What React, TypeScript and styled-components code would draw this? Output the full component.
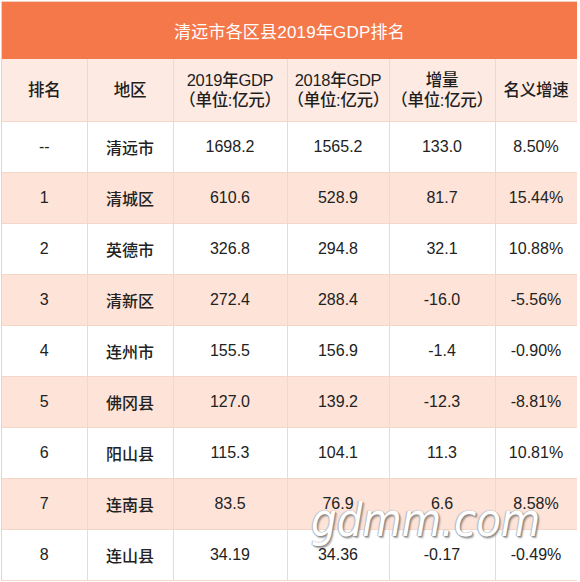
import React from "react";
import styled, { createGlobalStyle } from "styled-components";

type Row = {
  rank: string;
  area: string;
  gdp19: string;
  gdp18: string;
  diff: string;
  rate: string;
};

const rows: Row[] = [
  { rank: "--", area: "清远市", gdp19: "1698.2", gdp18: "1565.2", diff: "133.0", rate: "8.50%" },
  { rank: "1", area: "清城区", gdp19: "610.6", gdp18: "528.9", diff: "81.7", rate: "15.44%" },
  { rank: "2", area: "英德市", gdp19: "326.8", gdp18: "294.8", diff: "32.1", rate: "10.88%" },
  { rank: "3", area: "清新区", gdp19: "272.4", gdp18: "288.4", diff: "-16.0", rate: "-5.56%" },
  { rank: "4", area: "连州市", gdp19: "155.5", gdp18: "156.9", diff: "-1.4", rate: "-0.90%" },
  { rank: "5", area: "佛冈县", gdp19: "127.0", gdp18: "139.2", diff: "-12.3", rate: "-8.81%" },
  { rank: "6", area: "阳山县", gdp19: "115.3", gdp18: "104.1", diff: "11.3", rate: "10.81%" },
  { rank: "7", area: "连南县", gdp19: "83.5", gdp18: "76.9", diff: "6.6", rate: "8.58%" },
  { rank: "8", area: "连山县", gdp19: "34.19", gdp18: "34.36", diff: "-0.17", rate: "-0.49%" },
];

const colWidths = [85, 86, 114, 102, 106, 82];

const App = () => {
  return (
    <>
      <GlobalStyle />
      <Frame>
        <Title>清远市各区县2019年GDP排名</Title>
        <Table>
          <colgroup>
            {colWidths.map((w, i) => (
              <col key={i} style={{ width: w }} />
            ))}
          </colgroup>
          <thead>
            <tr>
              <Th>排名</Th>
              <Th>地区</Th>
              <Th>
                2019年GDP
                <br />
                （单位:亿元）
              </Th>
              <Th>
                2018年GDP
                <br />
                （单位:亿元）
              </Th>
              <Th>
                增量
                <br />
                （单位:亿元）
              </Th>
              <Th>名义增速</Th>
            </tr>
          </thead>
          <tbody>
            {rows.map((r, i) => (
              <Tr key={r.area} $striped={i % 2 === 1}>
                <Td>{r.rank}</Td>
                <Td $cjk>{r.area}</Td>
                <Td>{r.gdp19}</Td>
                <Td>{r.gdp18}</Td>
                <Td>{r.diff}</Td>
                <Td>{r.rate}</Td>
              </Tr>
            ))}
          </tbody>
        </Table>
        <Watermark>gdmm.com</Watermark>
      </Frame>
    </>
  );
};

export default App;

const GlobalStyle = createGlobalStyle`
  body {
    margin: 0;
    background: #ffffff;
    font-family: "Liberation Sans", "Noto Sans CJK SC", sans-serif;
  }
`;

const Frame = styled.div`
  position: relative;
  width: 575px;
  margin: 1px 0 0 1px;
  border-left: 1px solid #f3cfc0;
  border-top: 1px solid #f3cfc0;
  overflow: hidden;
`;

const Title = styled.div`
  height: 57px;
  background: #f4784a;
  color: #ffffff;
  font-size: 17px;
  display: flex;
  align-items: center;
  justify-content: center;
  letter-spacing: 0.2px;
`;

const Table = styled.table`
  width: 575px;
  border-collapse: collapse;
  table-layout: fixed;
`;

const Th = styled.th`
  height: 62px;
  padding: 0;
  background: #fdebe3;
  border: 1px solid #f6d6c8;
  border-top: none;
  color: #1e1e1e;
  font-size: 16.5px;
  font-weight: 500;
  line-height: 20px;
  text-align: center;
  white-space: nowrap;
  letter-spacing: -0.3px;
  &:first-child {
    border-left: none;
  }
`;

const Tr = styled.tr<{ $striped: boolean }>`
  background: ${(p) => (p.$striped ? "#fde3d8" : "#ffffff")};
`;

const Td = styled.td<{ $cjk?: boolean }>`
  height: 50px;
  padding: 0;
  border: 1px solid #f6d6c8;
  color: #222222;
  font-size: 16px;
  font-weight: ${(p) => (p.$cjk ? 500 : 400)};
  text-align: center;
  &:first-child {
    border-left: none;
  }
`;

const Watermark = styled.div`
  position: absolute;
  left: 309px;
  top: 490px;
  font-family: "DejaVu Sans", sans-serif;
  font-size: 47px;
  font-style: italic;
  font-weight: 300;
  color: #ffffff;
  transform: scaleX(0.86);
  transform-origin: left center;
  text-shadow: 0 0 1px #9a9a9a, 1px 1px 1px #8a8a8a, -1px 0 1px #bdbdbd,
    2px 2px 2px rgba(0, 0, 0, 0.35);
`;
